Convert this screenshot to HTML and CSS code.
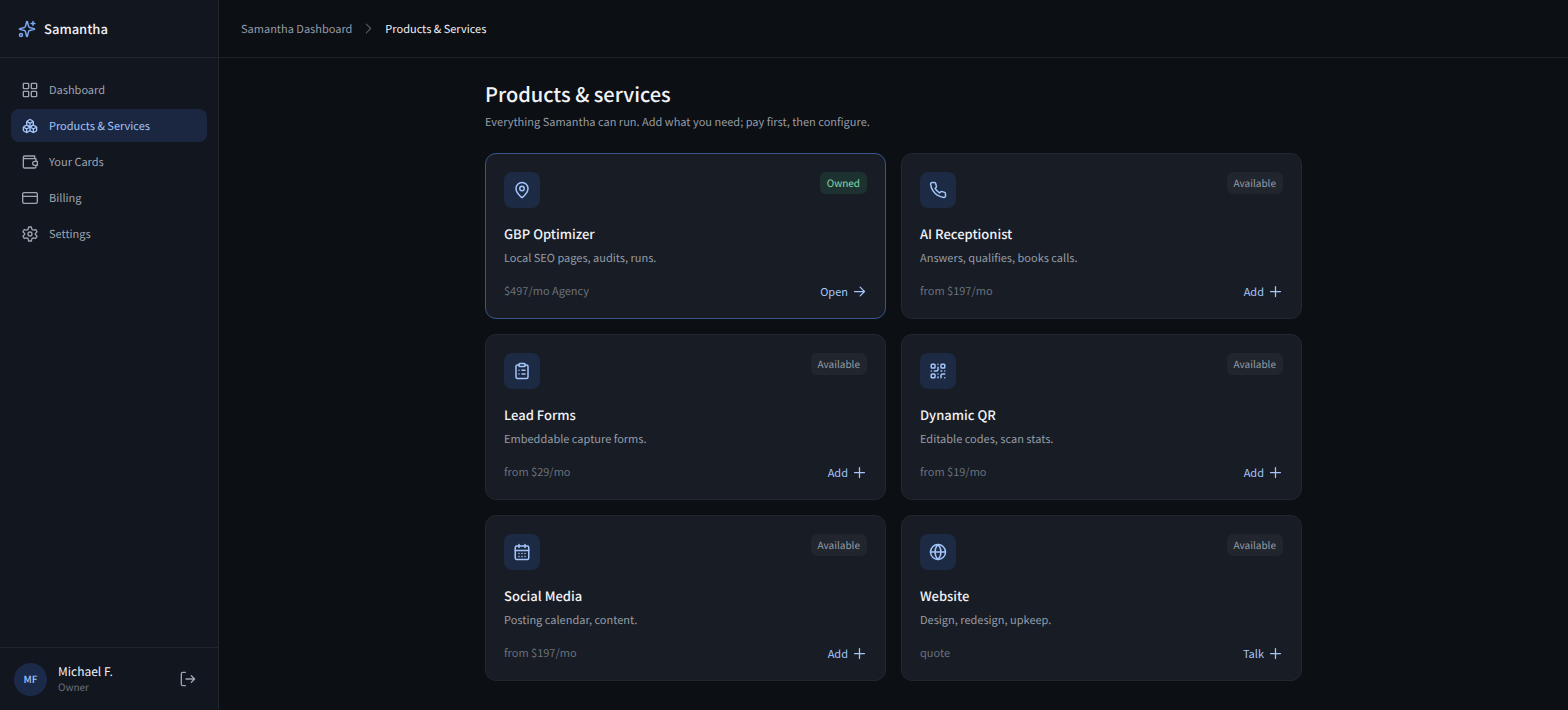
FILE: index.html
```
<!DOCTYPE html>
<html lang="en">
<head>
    <meta charset="utf-8">
    <title>Products &amp; Services - Samantha</title>
    <link rel="stylesheet" href="styles.css">
</head>
<body>
    <!-- Shared icons -->
    <svg class="sprite" aria-hidden="true">
        <symbol id="plus" viewBox="0 0 24 24"><path d="M12 4v16M4 12h16"/></symbol>
        <symbol id="arrow" viewBox="0 0 24 24"><path d="M4 12h16M13 5l7 7-7 7"/></symbol>
    </svg>

    <div class="app">
        <aside class="sidebar">
            <div class="brand">
                <svg class="icon icon-brand" viewBox="0 0 24 24"><path d="M9.9 15.5A2 2 0 0 0 8.500 14.100l-6.100-1.600a.5.5 0 0 1 0-1L8.500 9.900A2 2 0 0 0 9.900 8.500l1.600-6.100a.5.5 0 0 1 1 0l1.600 6.100a2 2 0 0 0 1.400 1.400l6.100 1.600a.5.5 0 0 1 0 1l-6.100 1.600a2 2 0 0 0-1.400 1.400l-1.600 6.100a.5.5 0 0 1-1 0z"/><path d="M20 2v5M22.500 4.500h-5"/><circle cx="4" cy="20" r="2"/></svg>
                <span>Samantha</span>
            </div>

            <nav class="nav">
                <a class="nav-item" href="#">
                    <svg class="icon" viewBox="0 0 24 24"><rect x="2" y="2" width="8" height="8" rx="1"/><rect x="14" y="2" width="8" height="8" rx="1"/><rect x="2" y="14" width="8" height="8" rx="1"/><rect x="14" y="14" width="8" height="8" rx="1"/></svg>
                    Dashboard
                </a>
                <a class="nav-item active" href="#" aria-current="page">
                    <svg class="icon" viewBox="0 0 24 24"><path d="M2.970 12.920A2 2 0 0 0 2 14.630v3.240a2 2 0 0 0 .970 1.710l3 1.800a2 2 0 0 0 2.060 0L12 19v-5.500l-5-3zM7 16.500l-4.740-2.850M7 16.500l5-3M7 16.500v5.170M12 13.500V19l3.970 2.380a2 2 0 0 0 2.060 0l3-1.800a2 2 0 0 0 .970-1.710v-3.240a2 2 0 0 0-.970-1.710L17 10.500zM17 16.500l-5-3M17 16.500l4.740-2.850M17 16.500v5.170"/><path d="M7.970 4.420A2 2 0 0 0 7 6.130v4.370l5 3 5-3V6.130a2 2 0 0 0-.970-1.710l-3-1.800a2 2 0 0 0-2.060 0zM12 8L7.260 5.150M12 8l4.740-2.850M12 13.500V8"/></svg>
                    Products &amp; Services
                </a>
                <a class="nav-item" href="#">
                    <svg class="icon" viewBox="0 0 24 24"><path d="M21 7H4a2 2 0 0 1-2-2 2 2 0 0 1 2-2h15v4M2 5v14a2 2 0 0 0 2 2h15a2 2 0 0 0 2-2v-2M21 7v4"/><path d="M23 11h-4a3 3 0 0 0 0 6h4z"/></svg>
                    Your Cards
                </a>
                <a class="nav-item" href="#">
                    <svg class="icon" viewBox="0 0 24 24"><rect x="1" y="4" width="22" height="16" rx="2"/><path d="M1 9.500h22"/></svg>
                    Billing
                </a>
                <a class="nav-item" href="#">
                    <svg class="icon" viewBox="0 0 24 24"><path d="M10 1.500h4l.9 3.500 2.200 1.300 3.500-1 2 3.500-2.600 2.500v1.400l2.600 2.500-2 3.500-3.500-1-2.200 1.300-.9 3.500h-4L9.100 19l-2.200-1.300-3.500 1-2-3.500L4 12.700v-1.400L1.400 8.800l2-3.500 3.500 1L9.100 5z"/><circle cx="12" cy="12" r="3"/></svg>
                    Settings
                </a>
            </nav>

            <div class="account">
                <div class="avatar">MF</div>
                <div class="account-text">
                    <div class="account-name">Michael F.</div>
                    <div class="account-role">Owner</div>
                </div>
                <button class="logout" type="button" aria-label="Log out">
                    <svg class="icon" viewBox="0 0 24 24"><path d="M8 2H4a2 2 0 0 0-2 2v16a2 2 0 0 0 2 2h4M9 12h13M17 7l5 5-5 5"/></svg>
                </button>
            </div>
        </aside>

        <div class="page">
            <header class="topbar">
                <a class="crumb" href="#">Samantha Dashboard</a>
                <svg class="icon chevron" viewBox="0 0 24 24"><path d="M8 4l8 8-8 8"/></svg>
                <span class="crumb current">Products &amp; Services</span>
            </header>

            <main class="content">
                <h1>Products &amp; services</h1>
                <p class="intro">Everything Samantha can run. Add what you need; pay first, then configure.</p>

                <div class="cards">
                    <section class="card owned">
                        <div class="card-top">
                            <div class="tile"><svg class="icon" viewBox="0 0 24 24"><path d="M20 10c0 5-5.500 10.200-7.400 11.800a1 1 0 0 1-1.200 0C9.500 20.200 4 15 4 10a8 8 0 0 1 16 0z"/><circle cx="12" cy="10" r="3"/></svg></div>
                            <span class="badge">Owned</span>
                        </div>
                        <h2>GBP Optimizer</h2>
                        <p class="desc">Local SEO pages, audits, runs.</p>
                        <div class="card-bottom">
                            <span class="price">$497/mo Agency</span>
                            <button class="action" type="button">Open <svg class="icon"><use href="#arrow"/></svg></button>
                        </div>
                    </section>

                    <section class="card">
                        <div class="card-top">
                            <div class="tile"><svg class="icon" viewBox="0 0 24 24"><path d="M22 16.920v3a2 2 0 0 1-2.180 2 19.800 19.800 0 0 1-8.630-3.070 19.500 19.500 0 0 1-6-6A19.800 19.800 0 0 1 2.120 4.180 2 2 0 0 1 4.110 2h3a2 2 0 0 1 2 1.720c.130.960.360 1.900.700 2.810a2 2 0 0 1-.450 2.110L8.090 9.910a16 16 0 0 0 6 6l1.270-1.270a2 2 0 0 1 2.110-.450c.910.340 1.850.570 2.810.700A2 2 0 0 1 22 16.920z"/></svg></div>
                            <span class="badge">Available</span>
                        </div>
                        <h2>AI Receptionist</h2>
                        <p class="desc">Answers, qualifies, books calls.</p>
                        <div class="card-bottom">
                            <span class="price">from $197/mo</span>
                            <button class="action" type="button">Add <svg class="icon"><use href="#plus"/></svg></button>
                        </div>
                    </section>

                    <section class="card">
                        <div class="card-top">
                            <div class="tile"><svg class="icon" viewBox="0 0 24 24"><rect x="8" y="2" width="8" height="4" rx="1"/><path d="M16 4h2a2 2 0 0 1 2 2v14a2 2 0 0 1-2 2H6a2 2 0 0 1-2-2V6a2 2 0 0 1 2-2h2M12 11h4M12 16h4M8 11h.01M8 16h.01"/></svg></div>
                            <span class="badge">Available</span>
                        </div>
                        <h2>Lead Forms</h2>
                        <p class="desc">Embeddable capture forms.</p>
                        <div class="card-bottom">
                            <span class="price">from $29/mo</span>
                            <button class="action" type="button">Add <svg class="icon"><use href="#plus"/></svg></button>
                        </div>
                    </section>

                    <section class="card">
                        <div class="card-top">
                            <div class="tile"><svg class="icon" viewBox="0 0 24 24"><rect x="3" y="3" width="5" height="5" rx="1"/><rect x="16" y="3" width="5" height="5" rx="1"/><rect x="3" y="16" width="5" height="5" rx="1"/><path d="M21 16h-3a2 2 0 0 0-2 2v3M21 21v.01M12 7v3a2 2 0 0 1-2 2H7M3 12h.01M12 3h.01M12 16v.01M16 12h1M21 12v.01M12 21v-1"/></svg></div>
                            <span class="badge">Available</span>
                        </div>
                        <h2>Dynamic QR</h2>
                        <p class="desc">Editable codes, scan stats.</p>
                        <div class="card-bottom">
                            <span class="price">from $19/mo</span>
                            <button class="action" type="button">Add <svg class="icon"><use href="#plus"/></svg></button>
                        </div>
                    </section>

                    <section class="card">
                        <div class="card-top">
                            <div class="tile"><svg class="icon" viewBox="0 0 24 24"><rect x="3" y="4" width="18" height="18" rx="2"/><path d="M8 2v4M16 2v4M3 10h18M8 14h.01M12 14h.01M16 14h.01M8 18h.01M12 18h.01M16 18h.01"/></svg></div>
                            <span class="badge">Available</span>
                        </div>
                        <h2>Social Media</h2>
                        <p class="desc">Posting calendar, content.</p>
                        <div class="card-bottom">
                            <span class="price">from $197/mo</span>
                            <button class="action" type="button">Add <svg class="icon"><use href="#plus"/></svg></button>
                        </div>
                    </section>

                    <section class="card">
                        <div class="card-top">
                            <div class="tile"><svg class="icon" viewBox="0 0 24 24"><circle cx="12" cy="12" r="10"/><path d="M2 12h20M12 2c-5.300 5.500-5.300 14.500 0 20 5.300-5.500 5.300-14.500 0-20z"/></svg></div>
                            <span class="badge">Available</span>
                        </div>
                        <h2>Website</h2>
                        <p class="desc">Design, redesign, upkeep.</p>
                        <div class="card-bottom">
                            <span class="price">quote</span>
                            <button class="action" type="button">Talk <svg class="icon"><use href="#plus"/></svg></button>
                        </div>
                    </section>
                </div>
            </main>
        </div>
    </div>
</body>
</html>
```
FILE: styles.css
```
* {
    box-sizing: border-box;
}

body {
    margin: 0;
    background: #0c0f14;
    color: #f1f3f7;
    font-family: "Noto Sans CJK SC", "Noto Sans", sans-serif;
    font-size: 11px;
    line-height: 18px;
    text-rendering: geometricPrecision;
}

h1, h2, p {
    margin: 0;
}

a {
    color: inherit;
    text-decoration: none;
}

button {
    padding: 0;
    border: none;
    background: none;
    font: inherit;
    cursor: pointer;
}

.sprite {
    display: none;
}

.icon {
    width: 16px;
    height: 16px;
    flex-shrink: 0;
    fill: none;
    stroke: currentColor;
    stroke-width: 2;
    stroke-linecap: round;
    stroke-linejoin: round;
}

.app {
    display: flex;
    min-height: 100vh;
}

/* Sidebar */
.sidebar {
    display: flex;
    flex-direction: column;
    width: 219px;
    flex-shrink: 0;
    background: #12161f;
    border-right: 1px solid #20242d;
}

.brand {
    display: flex;
    align-items: center;
    gap: 8px;
    height: 58px;
    padding: 0 18px;
    border-bottom: 1px solid #20242d;
    font-size: 13px;
    font-weight: 500;
}

.icon-brand {
    width: 18px;
    height: 18px;
    color: #7ba7ee;
}

.nav {
    display: flex;
    flex-direction: column;
    flex: 1;
    gap: 3px;
    padding: 15px 11px;
}

.nav-item {
    display: flex;
    align-items: center;
    gap: 11px;
    height: 33px;
    padding: 0 11px;
    border-radius: 8px;
    color: #9ea4b0;
}

.nav-item.active {
    background: #1b2740;
    color: #a3c5fa;
}

.account {
    display: flex;
    align-items: center;
    gap: 11px;
    height: 63px;
    padding: 0 22px 0 14px;
    border-top: 1px solid #20242d;
}

.avatar {
    display: flex;
    align-items: center;
    justify-content: center;
    width: 33px;
    height: 33px;
    border-radius: 50%;
    background: #1c2a4a;
    color: #a3c5fa;
    font-size: 10px;
    font-weight: 500;
}

.account-text {
    flex: 1;
    line-height: 15px;
}

.account-name {
    font-size: 12px;
}

.account-role {
    color: #6b717d;
    font-size: 10px;
}

.logout {
    display: flex;
    color: #9ea4b0;
}

/* Page */
.page {
    flex: 1;
    min-width: 0;
}

.topbar {
    display: flex;
    align-items: center;
    gap: 10px;
    height: 58px;
    padding: 0 22px;
    border-bottom: 1px solid #1d2129;
}

.crumb {
    color: #969ca8;
}

.crumb.current {
    color: #f1f3f7;
}

.chevron {
    width: 13px;
    height: 13px;
    color: #555b66;
}

.content {
    max-width: 861px;
    margin: 0 auto;
    padding: 22px 22px 29px;
}

h1 {
    font-size: 20px;
    font-weight: 500;
    line-height: 28px;
}

.intro {
    margin: 5px 0 22px;
    color: #969ca8;
}

.cards {
    display: grid;
    grid-template-columns: repeat(2, 1fr);
    gap: 15px;
}

.card {
    padding: 18px;
    border: 1px solid #22262f;
    border-radius: 11px;
    background: #181c24;
}

.card.owned {
    border-color: #36568c;
}

.card-top {
    display: flex;
    align-items: flex-start;
    justify-content: space-between;
    margin-bottom: 16px;
}

.tile {
    display: flex;
    align-items: center;
    justify-content: center;
    width: 36px;
    height: 36px;
    border-radius: 8px;
    background: #1d2a43;
    color: #a3c5fa;
}

.tile .icon {
    width: 18px;
    height: 18px;
}

.badge {
    padding: 2px 7px;
    border-radius: 6px;
    background: #21252d;
    color: #969ca8;
    font-size: 10px;
}

.owned .badge {
    background: #1d3230;
    color: #85d9ab;
}

h2 {
    font-size: 13px;
    font-weight: 500;
    line-height: 20px;
}

.desc {
    margin: 5px 0 15px;
    color: #969ca8;
}

.card-bottom {
    display: flex;
    align-items: center;
    justify-content: space-between;
}

.price {
    color: #6b717d;
}

.action {
    display: flex;
    align-items: center;
    gap: 4px;
    color: #a3c5fa;
}

.action .icon {
    width: 15px;
    height: 15px;
}
```
